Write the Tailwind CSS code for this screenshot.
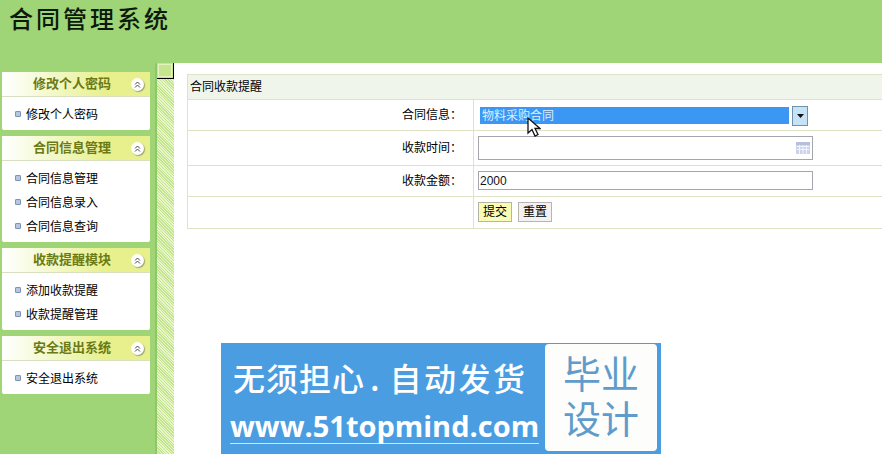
<!DOCTYPE html>
<html lang="zh-CN">
<head>
    <meta charset="UTF-8" />
    <title>合同管理系统</title>
    <script src="https://cdn.jsdelivr.net/npm/@tailwindcss/browser@4"></script>
</head>
<body class="h-[454px] w-[882px] overflow-hidden bg-white text-[12px] text-black font-['Noto_Sans_CJK_SC','Liberation_Sans',sans-serif]">
    <!-- Header -->
    <header class="h-[63px] bg-[#9fd477] pl-[9px]">
        <h1 class="text-[24px] leading-[35px] font-medium tracking-[3px] text-[#0c1a0c]">合同管理系统</h1>
    </header>

    <div class="flex h-[391px]">
        <!-- Sidebar -->
        <aside class="w-[157px] shrink-0 border-r-2 border-[#8cc866] bg-[#9fd477] pl-[2px] pt-[9px]">
            <section class="mb-[6px] w-[148px] rounded-[2px] bg-white">
                <div class="flex h-[25px] items-center border-b border-[#d8dfc0] bg-linear-to-r from-white to-[#e7f08c] to-70% pl-[31px] pr-[6px]">
                    <span class="flex-1 pb-[2px] text-[13px] font-bold text-[#6b7a14]">修改个人密码</span>
                    <span class="flex h-[13px] w-[13px] items-center justify-center rounded-full bg-white shadow-[1px_1px_1px_#99a27a]"><svg width="7" height="7" viewBox="0 0 7 7" fill="none" stroke="#444"><path d="M1 3.500 3.500 1 6 3.500M1 6.500 3.500 4 6 6.500"/></svg></span>
                </div>
                <ul class="h-[33px] pl-[13px] pt-[9px]">
                    <li class="flex h-[16px] items-center gap-[5px]"><span class="h-[6px] w-[6px] rounded-[1px] border border-[#7f93b8] bg-[#b6c6dc]"></span>修改个人密码</li>
                </ul>
            </section>
            <section class="mb-[6px] w-[148px] rounded-[2px] bg-white">
                <div class="flex h-[25px] items-center border-b border-[#d8dfc0] bg-linear-to-r from-white to-[#e7f08c] to-70% pl-[31px] pr-[6px]">
                    <span class="flex-1 pb-[2px] text-[13px] font-bold text-[#6b7a14]">合同信息管理</span>
                    <span class="flex h-[13px] w-[13px] items-center justify-center rounded-full bg-white shadow-[1px_1px_1px_#99a27a]"><svg width="7" height="7" viewBox="0 0 7 7" fill="none" stroke="#444"><path d="M1 3.500 3.500 1 6 3.500M1 6.500 3.500 4 6 6.500"/></svg></span>
                </div>
                <ul class="flex h-[81px] flex-col gap-[8px] pl-[13px] pt-[9px]">
                    <li class="flex h-[16px] items-center gap-[5px]"><span class="h-[6px] w-[6px] rounded-[1px] border border-[#7f93b8] bg-[#b6c6dc]"></span>合同信息管理</li>
                    <li class="flex h-[16px] items-center gap-[5px]"><span class="h-[6px] w-[6px] rounded-[1px] border border-[#7f93b8] bg-[#b6c6dc]"></span>合同信息录入</li>
                    <li class="flex h-[16px] items-center gap-[5px]"><span class="h-[6px] w-[6px] rounded-[1px] border border-[#7f93b8] bg-[#b6c6dc]"></span>合同信息查询</li>
                </ul>
            </section>
            <section class="mb-[6px] w-[148px] rounded-[2px] bg-white">
                <div class="flex h-[25px] items-center border-b border-[#d8dfc0] bg-linear-to-r from-white to-[#e7f08c] to-70% pl-[31px] pr-[6px]">
                    <span class="flex-1 pb-[2px] text-[13px] font-bold text-[#6b7a14]">收款提醒模块</span>
                    <span class="flex h-[13px] w-[13px] items-center justify-center rounded-full bg-white shadow-[1px_1px_1px_#99a27a]"><svg width="7" height="7" viewBox="0 0 7 7" fill="none" stroke="#444"><path d="M1 3.500 3.500 1 6 3.500M1 6.500 3.500 4 6 6.500"/></svg></span>
                </div>
                <ul class="flex h-[57px] flex-col gap-[8px] pl-[13px] pt-[9px]">
                    <li class="flex h-[16px] items-center gap-[5px]"><span class="h-[6px] w-[6px] rounded-[1px] border border-[#7f93b8] bg-[#b6c6dc]"></span>添加收款提醒</li>
                    <li class="flex h-[16px] items-center gap-[5px]"><span class="h-[6px] w-[6px] rounded-[1px] border border-[#7f93b8] bg-[#b6c6dc]"></span>收款提醒管理</li>
                </ul>
            </section>
            <section class="w-[148px] rounded-[2px] bg-white">
                <div class="flex h-[25px] items-center border-b border-[#d8dfc0] bg-linear-to-r from-white to-[#e7f08c] to-70% pl-[31px] pr-[6px]">
                    <span class="flex-1 pb-[2px] text-[13px] font-bold text-[#6b7a14]">安全退出系统</span>
                    <span class="flex h-[13px] w-[13px] items-center justify-center rounded-full bg-white shadow-[1px_1px_1px_#99a27a]"><svg width="7" height="7" viewBox="0 0 7 7" fill="none" stroke="#444"><path d="M1 3.500 3.500 1 6 3.500M1 6.500 3.500 4 6 6.500"/></svg></span>
                </div>
                <ul class="h-[33px] pl-[13px] pt-[9px]">
                    <li class="flex h-[16px] items-center gap-[5px]"><span class="h-[6px] w-[6px] rounded-[1px] border border-[#7f93b8] bg-[#b6c6dc]"></span>安全退出系统</li>
                </ul>
            </section>
        </aside>

        <!-- Collapse strip -->
        <div class="w-[17px] shrink-0 bg-[repeating-linear-gradient(45deg,#c3e58f_0,#c3e58f_1px,#e8f6c9_1px,#e8f6c9_2px)]">
            <div class="h-[16px] w-[17px] border-b border-r border-black bg-[#c6e58e] p-[1px]">
                <div class="h-full border border-[#e3f3bd]"></div>
            </div>
        </div>

        <!-- Main -->
        <main class="relative flex-1 overflow-hidden pl-[13px] pt-[11px]">
            <div class="w-[720px] border-l border-t border-[#dfe3c6]">
                <div class="flex h-[25px] items-center border-b border-[#dfe3c6] bg-[#f0f5ec] pb-[3px] pl-[2px]">合同收款提醒</div>
                <div class="flex h-[31px] border-b border-[#dfe3c6]">
                    <div class="flex w-[286px] items-center justify-end border-r border-[#dfe3c6] pb-[2px] pr-[11px]">合同信息：</div>
                    <div class="pl-[4px] pt-[5px]">
                        <div class="flex h-[21px] w-[330px] items-center bg-white">
                            <div class="ml-[2px] h-[17px] w-[309px] bg-[#3b96f4] pl-[2px] leading-[15px] text-[#dcefff]">物料采购合同</div>
                            <div class="ml-[3px] flex h-[20px] w-[16px] items-center justify-center border border-[#6f93ad] bg-[#c6e2f7]"><svg width="7" height="4" viewBox="0 0 7 4"><path d="M0 0h7L3.500 4z" fill="#111"/></svg></div>
                        </div>
                    </div>
                </div>
                <div class="flex h-[35px] border-b border-[#dfe3c6]">
                    <div class="flex w-[286px] items-center justify-end border-r border-[#dfe3c6] pb-[2px] pr-[11px]">收款时间：</div>
                    <div class="pl-[4px] pt-[5px]">
                        <div class="flex h-[24px] w-[335px] items-center justify-end border border-[#a5a5ad] pr-[2px]">
                            <svg width="14" height="12" viewBox="0 0 14 12"><rect width="14" height="12" fill="#ccd3ea"/><rect y="0" width="14" height="3" fill="#b6bfdb"/><path d="M1 4.500h12M1 7.500h12M3.500 3v9M7 3v9M10.500 3v9" stroke="#f2f4fb"/></svg>
                        </div>
                    </div>
                </div>
                <div class="flex h-[31px] border-b border-[#dfe3c6]">
                    <div class="flex w-[286px] items-center justify-end border-r border-[#dfe3c6] pb-[2px] pr-[11px]">收款金额：</div>
                    <div class="pl-[4px] pt-[5px]">
                        <input value="2000" class="block h-[19px] w-[335px] border border-[#a5a5ad] pl-[1px] text-[12px] font-['Liberation_Sans',sans-serif] text-[#111] outline-none" />
                    </div>
                </div>
                <div class="flex h-[32px] border-b border-[#dfe3c6]">
                    <div class="w-[286px] border-r border-[#dfe3c6]"></div>
                    <div class="flex gap-[6px] pl-[4px] pt-[5px]">
                        <button class="h-[20px] w-[34px] border border-[#b5b5a5] bg-[#fbfbb8] pb-[2px] text-[12px] leading-[16px]">提交</button>
                        <button class="h-[20px] w-[34px] border border-[#b5b5b5] bg-[#f3f1f1] pb-[2px] text-[12px] leading-[16px]">重置</button>
                    </div>
                </div>
            </div>

            <!-- Banner -->
            <div class="ml-[34px] mt-[114px] flex h-[112px] w-[440px] justify-between bg-[#4b9de2] pl-[9px] pr-[4px] pt-[1px]">
                <div class="text-white">
                    <div class="ml-[3px] mt-[11px] whitespace-nowrap text-[32px] leading-[44px] font-medium tracking-[1px]">无须担心<span class="ml-[5px] mr-[9px]">.</span><span class="tracking-[2.500px]">自动发货</span></div>
                    <div class="mt-[9px] whitespace-nowrap border-b border-[#cfe5f8] text-[29px] leading-[35px] font-bold font-['Open_Sans',sans-serif]">www.51topmind.com</div>
                </div>
                <div class="flex h-[107px] w-[112px] flex-col items-center rounded-[4px] bg-[#fdfdfb] pt-[5px] text-[38px] leading-[45px] text-[#5f9ccb]">
                    <span>毕业</span>
                    <span>设计</span>
                </div>
            </div>

            <!-- Mouse pointer -->
            <svg class="absolute left-[353px] top-[54px]" width="14" height="21" viewBox="0 0 14 21"><path d="M1 1v15l4-3.500 3 6.500 3-1.500-3-6h5z" fill="#fff" stroke="#111" stroke-width="1.300"/></svg>
        </main>
    </div>
</body>
</html>
